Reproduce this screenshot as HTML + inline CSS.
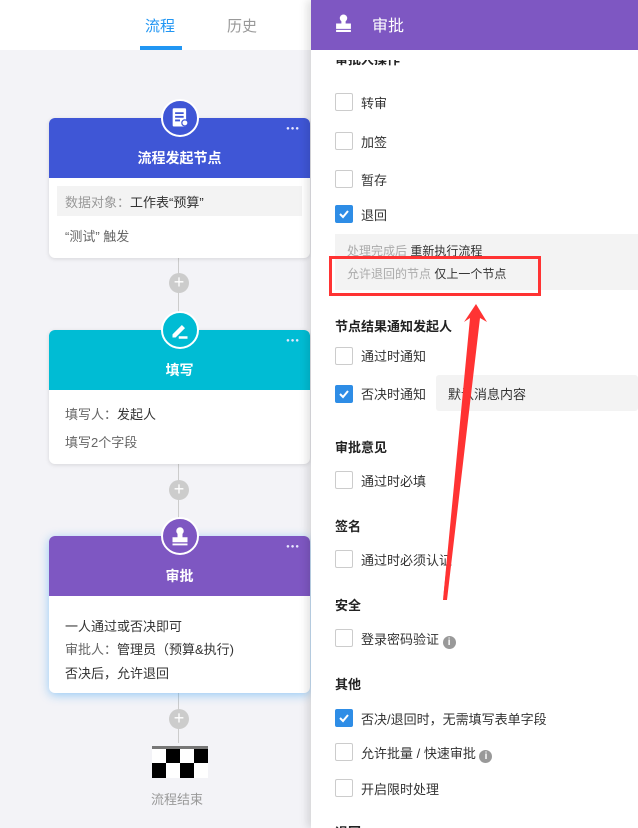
<!DOCTYPE html>
<html><head><meta charset="utf-8"><style>
*{margin:0;padding:0;box-sizing:border-box}
html,body{width:638px;height:828px;overflow:hidden}
body{background:#f3f3f7;font-family:"Liberation Sans","Noto Sans CJK SC",sans-serif;position:relative;font-size:13px;color:#333}
.a{position:absolute}
.top{left:0;top:0;width:311px;height:50px;background:#fff}
.line{left:178px;width:1px;background:#ccc}
.card{left:49px;width:261px;background:#fff;border-radius:6px;box-shadow:0 1px 4px rgba(0,0,0,.12);overflow:hidden}
.hd{height:60px;color:#fff;font-weight:bold;font-size:14px;text-align:center;padding-top:30px;position:relative}
.dots{position:absolute;right:10px;top:8px;font-size:6px;letter-spacing:1px;color:#e8e8ff}
.circ{width:38px;height:38px;border-radius:50%;border:2px solid #fff;display:flex;align-items:center;justify-content:center}
.plus{left:169px;width:20px;height:20px;border-radius:50%;background:#ccc;color:#fff;font-size:18px;line-height:19px;text-align:center}
.panel{left:311px;top:0;width:327px;height:828px;background:#fff;box-shadow:-4px 0 8px rgba(0,0,0,.12)}
.ph{left:311px;top:0;width:327px;height:50px;background:#7E57C2;color:#fff;font-size:16px}
.cb{left:335px;width:18px;height:18px;border:1px solid #ccc;border-radius:2px;background:#fff}
.cb.on{background:#2e8de6;border-color:#2e8de6}
.lb{left:361px;font-size:13px;color:#333}
.sec{left:335px;font-weight:bold;font-size:13px;color:#222}
.g{color:#999}
</style></head><body>
<div class="a top"></div>
<div class="a" style="left:145px;top:15px;font-size:15px;color:#2196F3">流程</div>
<div class="a" style="left:140px;top:46px;width:42px;height:4px;background:#2196F3"></div>
<div class="a" style="left:227px;top:15px;font-size:15px;color:#999">历史</div>

<div class="a line" style="top:258px;height:70px"></div>
<div class="a line" style="top:464px;height:70px"></div>
<div class="a line" style="top:693px;height:50px"></div>

<div class="a card" style="top:118px;height:140px">
 <div class="hd" style="background:#3F56D6">流程发起节点<span class="dots">●●●</span></div>
 <div class="a" style="left:8px;top:68px;width:245px;height:30px;background:#f3f3f3;padding:6px 8px;font-size:13px"><span class="g">数据对象：</span>工作表“预算”</div>
 <div class="a g" style="left:16px;top:108px;color:#666">“测试” 触发</div>
</div>
<div class="a circ" style="left:161px;top:99px;background:#3F56D6"><svg width="20" height="22" viewBox="0 0 16 18"><rect x="2" y="1" width="11" height="15" rx="1" fill="#fff"/><path d="M4 5h7M4 8h7M4 11h4" stroke="#3F56D6" stroke-width="1.5"/><circle cx="12" cy="13" r="2.5" fill="#fff" stroke="#3F56D6"/></svg></div>
<div class="a plus" style="top:273px">+</div>

<div class="a card" style="top:330px;height:134px">
 <div class="hd" style="background:#00BCD4">填写<span class="dots">●●●</span></div>
 <div class="a" style="left:16px;top:74px"><span style="color:#666">填写人：</span>发起人</div>
 <div class="a" style="left:16px;top:102px;color:#666">填写2个字段</div>
</div>
<div class="a circ" style="left:161px;top:311px;background:#00BCD4"><svg width="20" height="20" viewBox="0 0 16 16"><path d="M2 11.5l7.5-7.5 2.5 2.5-7.5 7.5H2z" fill="#fff"/><path d="M7 14h7" stroke="#fff" stroke-width="2"/></svg></div>
<div class="a plus" style="top:480px">+</div>

<div class="a card" style="top:536px;height:157px;box-shadow:0 2px 10px rgba(33,150,243,.45)">
 <div class="hd" style="background:#7E57C2">审批<span class="dots">●●●</span></div>
 <div class="a" style="left:16px;top:80px">一人通过或否决即可</div>
 <div class="a" style="left:16px;top:103px"><span style="color:#666">审批人：</span>管理员（预算&amp;执行)</div>
 <div class="a" style="left:16px;top:127px">否决后，允许退回</div>
</div>
<div class="a circ" style="left:161px;top:517px;background:#7E57C2"><svg width="20" height="20" viewBox="0 0 16 16"><circle cx="8" cy="4" r="3" fill="#fff"/><path d="M6 6h4v3h4v4H2V9h4z" fill="#fff"/><rect x="2" y="14" width="12" height="1.5" fill="#fff"/></svg></div>
<div class="a plus" style="top:709px">+</div>

<div class="a" style="left:152px;top:746px;width:56px;height:3px;background:#777"></div>
<svg class="a" style="left:152px;top:749px" width="56" height="29"><rect width="56" height="29" fill="#fff"/><rect x="14" y="0" width="14" height="14"/><rect x="42" y="0" width="14" height="14"/><rect x="0" y="14" width="14" height="15"/><rect x="28" y="14" width="14" height="15"/></svg>
<div class="a" style="left:151px;top:789px;color:#999">流程结束</div>

<div class="a panel"></div>
<div class="a ph"><svg class="a" style="left:24px;top:14px" width="17" height="18" viewBox="0 0 16 17"><circle cx="8" cy="4" r="3.5" fill="#fff"/><path d="M6 6h4v3h5v5H1V9h5z" fill="#fff"/><rect x="1" y="15" width="14" height="2" fill="#fff"/></svg><span class="a" style="left:61px;top:12px">审批</span></div>
<div class="a sec" style="top:60px;height:6px;overflow:hidden;line-height:0">审批人操作</div>

<div class="a cb" style="top:93px"></div><div class="a lb" style="top:93px">转审</div>
<div class="a cb" style="top:132px"></div><div class="a lb" style="top:132px">加签</div>
<div class="a cb" style="top:170px"></div><div class="a lb" style="top:170px">暂存</div>
<div class="a cb on" style="top:205px"><svg width="16" height="16"><path d="M4 8l3 3 5-6" stroke="#fff" stroke-width="2" fill="none"/></svg></div><div class="a lb" style="top:205px">退回</div>
<div class="a" style="left:335px;top:234px;width:303px;height:56px;background:#f3f3f3"></div>
<div class="a" style="left:347px;top:242px;font-size:12px"><span style="color:#aaa">处理完成后</span> 重新执行流程</div>
<div class="a" style="left:347px;top:265px;font-size:12px"><span style="color:#aaa">允许退回的节点</span> 仅上一个节点</div>
<div class="a" style="left:329px;top:256px;width:212px;height:40px;border:3px solid #f33"></div>

<div class="a sec" style="top:316px">节点结果通知发起人</div>
<div class="a cb" style="top:347px"></div><div class="a lb" style="top:346px">通过时通知</div>
<div class="a cb on" style="top:385px"><svg width="16" height="16"><path d="M4 8l3 3 5-6" stroke="#fff" stroke-width="2" fill="none"/></svg></div><div class="a lb" style="top:384px">否决时通知</div>
<div class="a" style="left:436px;top:375px;width:202px;height:36px;background:#f3f3f3;border-radius:3px;padding:9px 0 0 12px">默认消息内容</div>

<div class="a sec" style="top:437px">审批意见</div>
<div class="a cb" style="top:471px"></div><div class="a lb" style="top:471px">通过时必填</div>
<div class="a sec" style="top:516px">签名</div>
<div class="a cb" style="top:550px"></div><div class="a lb" style="top:550px">通过时必须认证</div>
<div class="a sec" style="top:595px">安全</div>
<div class="a cb" style="top:629px"></div><div class="a lb" style="top:629px">登录密码验证 <span style="display:inline-block;width:13px;height:13px;border-radius:50%;background:#999;color:#fff;font-size:10px;text-align:center;line-height:13px;font-weight:bold;vertical-align:-1px">i</span></div>
<div class="a sec" style="top:674px">其他</div>
<div class="a cb on" style="top:709px"><svg width="16" height="16"><path d="M4 8l3 3 5-6" stroke="#fff" stroke-width="2" fill="none"/></svg></div><div class="a lb" style="top:709px">否决/退回时，无需填写表单字段</div>
<div class="a cb" style="top:743px"></div><div class="a lb" style="top:743px">允许批量 / 快速审批 <span style="display:inline-block;width:13px;height:13px;border-radius:50%;background:#999;color:#fff;font-size:10px;text-align:center;line-height:13px;font-weight:bold;vertical-align:-1px">i</span></div>
<div class="a cb" style="top:779px"></div><div class="a lb" style="top:779px">开启限时处理</div>
<div class="a sec" style="top:822px">退回…</div>

<svg class="a" style="left:0;top:0" width="638" height="828"><path d="M443 600 L470 318 L464 322 L476 304 L487 322 L480 318 L447 600Z" fill="#f33"/><path d="M443 600 L472 318 L478 318 Z" fill="#f33"/></svg>
</body></html>
